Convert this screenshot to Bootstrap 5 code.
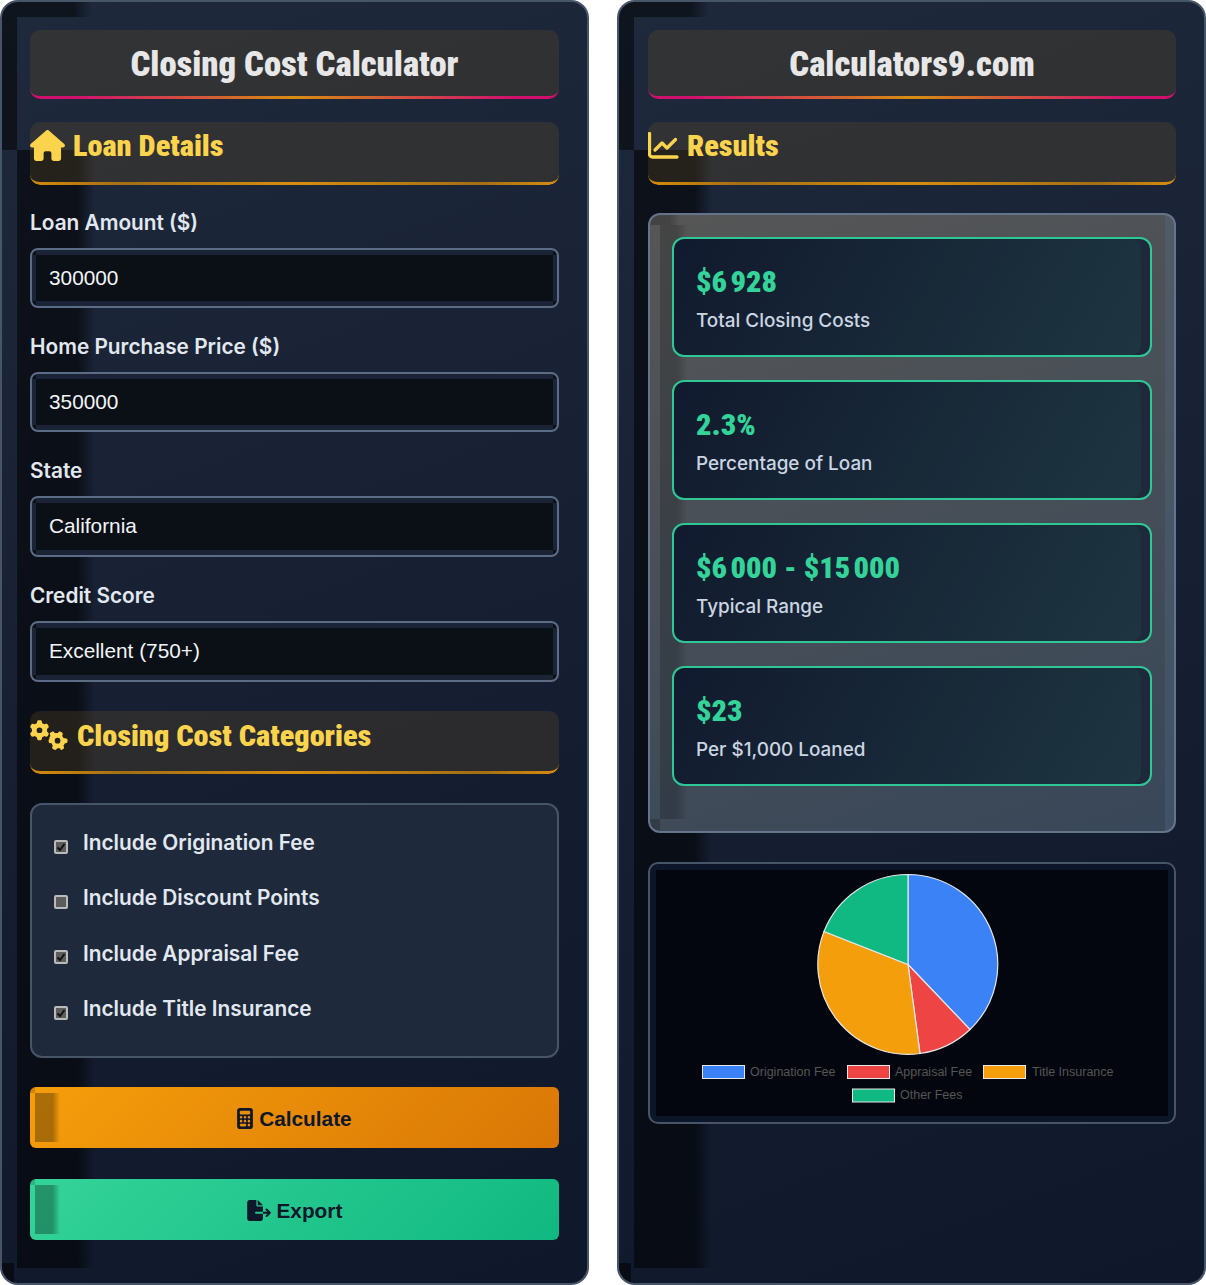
<!DOCTYPE html>
<html lang="en"><head><meta charset="utf-8"><title>Closing Cost Calculator</title>
<link href="https://cdn.jsdelivr.net/npm/bootstrap@5.3.0/dist/css/bootstrap.min.css" rel="stylesheet">
<style>
body{margin:0;background:#fff;font-family:Inter,"Liberation Sans",sans-serif}
.shell{gap:28px;width:1206px;height:1285px}
.pane{width:589px;height:1285px;padding:28px;border:2px solid #475569;border-radius:18px;
 background-color:transparent;
 background-image:
  linear-gradient(rgba(0,0,0,.5),rgba(0,0,0,.5)),
  linear-gradient(90deg,rgba(0,0,0,.5) 75%,transparent),
  linear-gradient(90deg,rgba(0,0,0,.55) 78%,transparent),
  linear-gradient(rgba(0,0,0,.55),rgba(0,0,0,.55)),
  linear-gradient(160deg,#1e293b,#0f172a);
 background-size:15px 148px,75px 15px,78px 1118px,12px 20px,100% 100%;
 background-position:0 0,15px 0,15px 148px,0 100%,0 0;
 background-repeat:no-repeat}
.pane-b{padding-left:29px}
.cap{position:relative;margin:0;border-radius:10px;background:rgba(118,88,36,.24);font-family:"Roboto Condensed",Roboto,sans-serif;font-stretch:75%;font-weight:900}
.cap::after{content:"";position:absolute;left:0;right:0;bottom:0;height:14px;opacity:.85;border:solid transparent;border-width:0 0 3px;border-radius:0 0 10px 10px;
 -webkit-mask:linear-gradient(#000 0 0) padding-box,linear-gradient(#000 0 0);-webkit-mask-composite:xor;mask-composite:exclude}
.cap-main{height:69px;font-size:34.7px;line-height:69px;text-align:center;color:#e7e7e7;margin-bottom:23px}
.cap-main::after{background:linear-gradient(90deg,#ec0a7a 8%,#f59e0b 50%,#ec0a7a 92%) border-box}
.cap-sec{height:63px;font-size:30.3px;line-height:48px;color:#fcd34d;display:flex;align-items:flex-start;gap:8px}
.cap-sec::after{background:linear-gradient(90deg,#f59e0b,#b97a10 18%,#f59e0b 50%,#b97a10 85%,#f59e0b) border-box}
.cap-sec svg{fill:#fcd34d;flex:none;margin-top:8px}
.cap-sec svg.trend{fill:none;stroke:#fcd34d;stroke-width:3.3;stroke-linecap:round;stroke-linejoin:round;margin-top:10px}
.cap-gear{margin-top:28px;line-height:50px;gap:9px}
.fld{margin-top:24px;height:100px}
.fld-sel{height:101px}
.fld label{display:block;font-weight:600;font-size:20.8px;line-height:27px;color:#e2e8f0;margin-bottom:12px}
.ent{display:block;width:100%;height:60px;padding:0 17px;border:2px solid #5c6c85;border-radius:8px;color:#f1f5f9;font:20.8px "Liberation Sans",Arial,sans-serif;appearance:none;outline:0;
 background:
  linear-gradient(#1a2436,#1a2436) center top/calc(100% - 8px) 5px no-repeat,
  linear-gradient(#1a2436,#1a2436) center bottom/calc(100% - 8px) 5px no-repeat,
  linear-gradient(#1a2436,#1a2436) left center/4px calc(100% - 10px) no-repeat,
  linear-gradient(#1a2436,#1a2436) right center/4px calc(100% - 10px) no-repeat,
  #0b0f16}
.ent-sel{height:61px;padding-bottom:2px}
.checks{margin-top:29px;height:255px;padding:10px 22px;background:#1e293b;border:2px solid #475569;border-radius:12px}
.chk-row{height:55.4px;display:flex;align-items:center;gap:15px;font-weight:600;font-size:20.8px;color:#e2e8f0}
.chk-box{appearance:none;flex:none;width:14px;height:14px;margin:8px 0 0;background:#5c5c5c;border:2px solid #bababa;border-radius:2px}
.chk-box:checked{background:#5c5c5c url("data:image/svg+xml,%3Csvg xmlns='http://www.w3.org/2000/svg' viewBox='0 0 10 10'%3E%3Cpath d='M1.500 5.500 4 8 8.500 2' fill='none' stroke='%23111' stroke-width='2'/%3E%3C/svg%3E") center/100% no-repeat}
.act{position:relative;overflow:hidden;display:block;width:100%;height:61px;padding:2px 0 0;border:0;border-radius:6px;font:700 20.8px "Liberation Sans",Arial,sans-serif;color:#0f172a}
.act::before{content:"";position:absolute;left:5px;top:6px;bottom:6px;width:25px;background:linear-gradient(90deg,rgba(0,0,0,.3) 70%,transparent)}
.act::after{content:"";position:absolute;left:0;top:0;width:5px;height:6px;background:rgba(0,0,0,.15)}
.act svg{fill:#0f172a;vertical-align:-3px}
.go{margin-top:29px;background:linear-gradient(135deg,#f59e0b,#d97706)}
.out{margin-top:31px;background:linear-gradient(135deg,#34d399,#10b981)}
.res{margin-top:28px;height:620px;padding:22px;border:2px solid #64748b;border-radius:12px;
 background-image:
  linear-gradient(90deg,rgba(0,0,0,.22) 65%,transparent),
  linear-gradient(90deg,rgba(0,0,0,.2) 60%,transparent),
  linear-gradient(rgba(0,0,0,.2),rgba(0,0,0,.2)),
  linear-gradient(rgba(90,130,170,.18),rgba(90,130,170,.18)),
  linear-gradient(160deg,#565656,#384759);
 background-size:30px 10px,28px 594px,10px 12px,9px 100%,100% 100%;
 background-position:0 0,10px 10px,0 100%,100% 0,0 0;background-repeat:no-repeat}
.tile{height:120px;padding:24px 22px;border:2px solid #2ec795;border-radius:12px;background:linear-gradient(120deg,#111a2e,#1e3641);box-shadow:inset -9px 0 0 #1e293b}
.tile+.tile{margin-top:23px}
.num{font-family:"Roboto Condensed",Roboto,sans-serif;font-stretch:75%;font-weight:900;font-size:30.3px;line-height:38px;color:#34d399}
.lbl{margin-top:6px;font-weight:500;font-size:18.9px;line-height:27px;color:#cbd5e1}
.plot{margin-top:29px;height:262px;padding:6px;border:2px solid #475569;border-radius:10px;background:#0d1629}
.plot svg{display:block;background:#03060e}
.plot text{font:12.5px "Liberation Sans",Arial,sans-serif;fill:#555}
</style></head>
<body>
<div class="shell d-flex">
<section class="pane">
 <h1 class="cap cap-main">Closing Cost Calculator</h1>
 <h2 class="cap cap-sec"><svg width="35" height="31" viewBox="0 0 576 512"><path d="M575.8 255.5c0 18-15 32.100-32 32.100h-32l.7 160.200c0 2.700-.2 5.400-.5 8.100V472c0 22.100-17.900 40-40 40H456c-1.100 0-2.200 0-3.300-.1-1.400.1-2.800.1-4.200.1H416 392c-22.100 0-40-17.900-40-40V448 384c0-17.700-14.300-32-32-32H256c-17.700 0-32 14.300-32 32v64 24c0 22.100-17.900 40-40 40H160 128.100c-1.500 0-3-.1-4.500-.2-1.200.1-2.400.2-3.600.2H104c-22.100 0-40-17.900-40-40V360c0-.9 0-1.900.1-2.800V287.600H32c-18 0-32-14-32-32.100 0-9 3-17 10-24L266.400 8c7-7 15-8 22-8s15 2 21 7L564.800 231.500c8 7 12 15 11 24z"/></svg><span>Loan Details</span></h2>
 <div class="fld"><label for="a">Loan Amount ($)</label><input id="a" class="ent" value="300000"></div>
 <div class="fld"><label for="b">Home Purchase Price ($)</label><input id="b" class="ent" value="350000"></div>
 <div class="fld fld-sel"><label for="c">State</label><select id="c" class="ent ent-sel"><option>California</option></select></div>
 <div class="fld fld-sel"><label for="d">Credit Score</label><select id="d" class="ent ent-sel"><option>Excellent (750+)</option></select></div>
 <h2 class="cap cap-sec cap-gear"><svg width="38" height="32" viewBox="0 0 640 512"><path d="M308.500 135.300c7.100-6.300 9.900-16.200 6.200-25-2.300-5.300-4.800-10.500-7.600-15.500L304 89.400c-3-5-6.300-9.900-9.800-14.600-5.700-7.600-15.700-10.100-24.700-7.100l-28.200 9.300c-10.700-8.800-23-16-36.200-20.900L199 27.100c-1.900-9.300-9.100-16.700-18.500-17.800C173.900 8.400 167.200 8 160.400 8h-.7c-6.800 0-13.500.4-20.100 1.200-9.400 1.100-16.600 8.600-18.500 17.800L115 56.100c-13.300 5-25.500 12.100-36.200 20.900L50.500 67.800c-9-3-19-.5-24.700 7.100-3.500 4.700-6.800 9.600-9.900 14.600l-3 5.300c-2.800 5-5.300 10.200-7.600 15.600-3.700 8.700-.9 18.600 6.200 25l22.200 19.800C32.600 161.900 32 168.900 32 176s.6 14.100 1.700 20.900L11.500 216.700c-7.100 6.300-9.900 16.200-6.200 25 2.300 5.300 4.800 10.500 7.600 15.600l3 5.200c3 5.100 6.300 9.900 9.900 14.600 5.700 7.600 15.700 10.100 24.700 7.100l28.200-9.300c10.700 8.800 23 16 36.200 20.900l6.100 29.100c1.900 9.300 9.100 16.700 18.500 17.800 6.700.8 13.500 1.200 20.400 1.200s13.700-.4 20.400-1.200c9.400-1.100 16.600-8.600 18.500-17.800l6.100-29.100c13.300-5 25.500-12.100 36.200-20.900l28.200 9.300c9 3 19 .5 24.700-7.100 3.500-4.700 6.800-9.500 9.800-14.600l3.100-5.400c2.800-5 5.300-10.200 7.600-15.500 3.700-8.700.9-18.600-6.200-25l-22.200-19.800c1.100-6.800 1.700-13.800 1.700-20.900s-.6-14.100-1.700-20.900l22.200-19.800zM112 176a48 48 0 1 1 96 0 48 48 0 1 1-96 0zM504.700 500.500c6.300 7.100 16.200 9.900 25 6.200 5.300-2.300 10.500-4.800 15.500-7.600l5.400-3.100c5-3 9.900-6.300 14.600-9.800 7.600-5.700 10.100-15.700 7.100-24.700l-9.300-28.200c8.800-10.700 16-23 20.900-36.200l29.100-6.100c9.300-1.900 16.700-9.100 17.800-18.500.8-6.700 1.200-13.500 1.200-20.400s-.4-13.700-1.200-20.400c-1.100-9.400-8.600-16.600-17.800-18.500L563 307c-5-13.300-12.100-25.500-20.900-36.200l9.300-28.200c3-9 .5-19-7.100-24.700-4.700-3.500-9.600-6.800-14.600-9.900l-5.300-3c-5-2.800-10.200-5.300-15.600-7.600-8.700-3.700-18.600-.9-25 6.200l-19.800 22.200c-6.800-1.100-13.800-1.700-20.900-1.700s-14.100.6-20.900 1.700l-19.800-22.200c-6.300-7.100-16.200-9.900-25-6.200-5.300 2.300-10.500 4.800-15.600 7.600l-5.200 3c-5.100 3-9.900 6.300-14.600 9.900-7.600 5.700-10.100 15.700-7.100 24.700l9.300 28.200c-8.800 10.700-16 23-20.900 36.200L333.200 313c-9.300 1.900-16.700 9.100-17.800 18.500-.8 6.700-1.200 13.500-1.200 20.400s.4 13.700 1.200 20.400c1.100 9.400 8.600 16.600 17.800 18.500l29.100 6.100c5 13.300 12.100 25.500 20.900 36.200l-9.300 28.200c-3 9-.5 19 7.100 24.700 4.700 3.500 9.500 6.800 14.600 9.800l5.400 3.100c5 2.800 10.200 5.300 15.500 7.600 8.700 3.700 18.600.9 25-6.200l19.800-22.200c6.800 1.100 13.800 1.700 20.900 1.700s14.100-.6 20.900-1.700l19.800 22.200zM464 304a48 48 0 1 1 0 96 48 48 0 1 1 0-96z"/></svg><span>Closing Cost Categories</span></h2>
 <div class="checks">
  <div class="chk-row"><input id="e1" type="checkbox" class="chk-box" checked><label for="e1">Include Origination Fee</label></div>
  <div class="chk-row"><input id="e2" type="checkbox" class="chk-box"><label for="e2">Include Discount Points</label></div>
  <div class="chk-row"><input id="e3" type="checkbox" class="chk-box" checked><label for="e3">Include Appraisal Fee</label></div>
  <div class="chk-row"><input id="e4" type="checkbox" class="chk-box" checked><label for="e4">Include Title Insurance</label></div>
 </div>
 <button class="act go" type="button"><svg width="16" height="21" viewBox="0 0 384 512"><path d="M64 0C28.700 0 0 28.700 0 64V448c0 35.300 28.700 64 64 64H320c35.300 0 64-28.700 64-64V64c0-35.300-28.700-64-64-64H64zM96 64H288c17.700 0 32 14.300 32 32v32c0 17.700-14.300 32-32 32H96c-17.700 0-32-14.300-32-32V96c0-17.700 14.300-32 32-32zm32 160a32 32 0 1 1-64 0 32 32 0 1 1 64 0zM96 352a32 32 0 1 1 0-64 32 32 0 1 1 0 64zM64 416c0-17.700 14.300-32 32-32h96c17.700 0 32 14.300 32 32s-14.300 32-32 32H96c-17.700 0-32-14.300-32-32zM192 256a32 32 0 1 1 0-64 32 32 0 1 1 0 64zm32 64a32 32 0 1 1-64 0 32 32 0 1 1 64 0zm64-64a32 32 0 1 1 0-64 32 32 0 1 1 0 64zm32 64a32 32 0 1 1-64 0 32 32 0 1 1 64 0zM288 448a32 32 0 1 1 0-64 32 32 0 1 1 0 64z"/></svg> Calculate</button>
 <button class="act out" type="button"><svg width="24" height="21" viewBox="0 0 576 512"><path d="M0 64C0 28.700 28.700 0 64 0H224V128c0 17.700 14.300 32 32 32H384V288H216c-13.300 0-24 10.700-24 24s10.700 24 24 24H384V448c0 35.300-28.700 64-64 64H64c-35.300 0-64-28.700-64-64V64zM384 336V288H494.100l-39-39c-9.400-9.400-9.400-24.600 0-33.900s24.600-9.400 33.900 0l80 80c9.400 9.400 9.400 24.600 0 33.900l-80 80c-9.400 9.400-24.600 9.400-33.900 0s-9.400-24.600 0-33.900l39-39H384zm0-208H256V0L384 128z"/></svg> Export</button>
</section>
<section class="pane pane-b">
 <h1 class="cap cap-main">Calculators9.com</h1>
 <h2 class="cap cap-sec"><svg class="trend" width="31" height="27" viewBox="0 0 31 27"><path d="M1.500 1.500V22a3 3 0 0 0 3 3H29"/><path d="M7 18l7-7 5 5 8.500-8.500"/></svg><span>Results</span></h2>
 <div class="res">
  <div class="tile"><div class="num">$6&#8239;928</div><div class="lbl">Total Closing Costs</div></div>
  <div class="tile"><div class="num">2.3%</div><div class="lbl">Percentage of Loan</div></div>
  <div class="tile"><div class="num">$6&#8239;000 - $15&#8239;000</div><div class="lbl">Typical Range</div></div>
  <div class="tile"><div class="num">$23</div><div class="lbl">Per $1,000 Loaned</div></div>
 </div>
 <div class="plot">
  <svg width="512" height="246" viewBox="0 0 512 246">
   <g stroke="#e5e7eb" stroke-width="1.2" transform="translate(252,94.500)">
    <path fill="#3b82f6" d="M0 0V-90A90 90 0 0 1 62 65Z"/>
    <path fill="#ef4444" d="M0 0L62 65A90 90 0 0 1 12 89Z"/>
    <path fill="#f59e0b" d="M0 0L12 89A90 90 0 0 1 -84 -33Z"/>
    <path fill="#10b981" d="M0 0L-84 -33A90 90 0 0 1 0 -90Z"/>
   </g>
   <g stroke="#e5e7eb">
    <rect x="46.500" y="195.500" width="42" height="13" fill="#3b82f6"/>
    <rect x="191.500" y="195.500" width="42" height="13" fill="#ef4444"/>
    <rect x="327.500" y="195.500" width="42" height="13" fill="#f59e0b"/>
    <rect x="196.500" y="219" width="42" height="13" fill="#10b981"/>
   </g>
   <text x="94" y="206">Origination Fee</text>
   <text x="239" y="206">Appraisal Fee</text>
   <text x="376" y="206">Title Insurance</text>
   <text x="244" y="229">Other Fees</text>
  </svg>
 </div>
</section>
</div>
<script src="https://cdn.jsdelivr.net/npm/bootstrap@5.3.0/dist/js/bootstrap.bundle.min.js"></script>
</body></html>
